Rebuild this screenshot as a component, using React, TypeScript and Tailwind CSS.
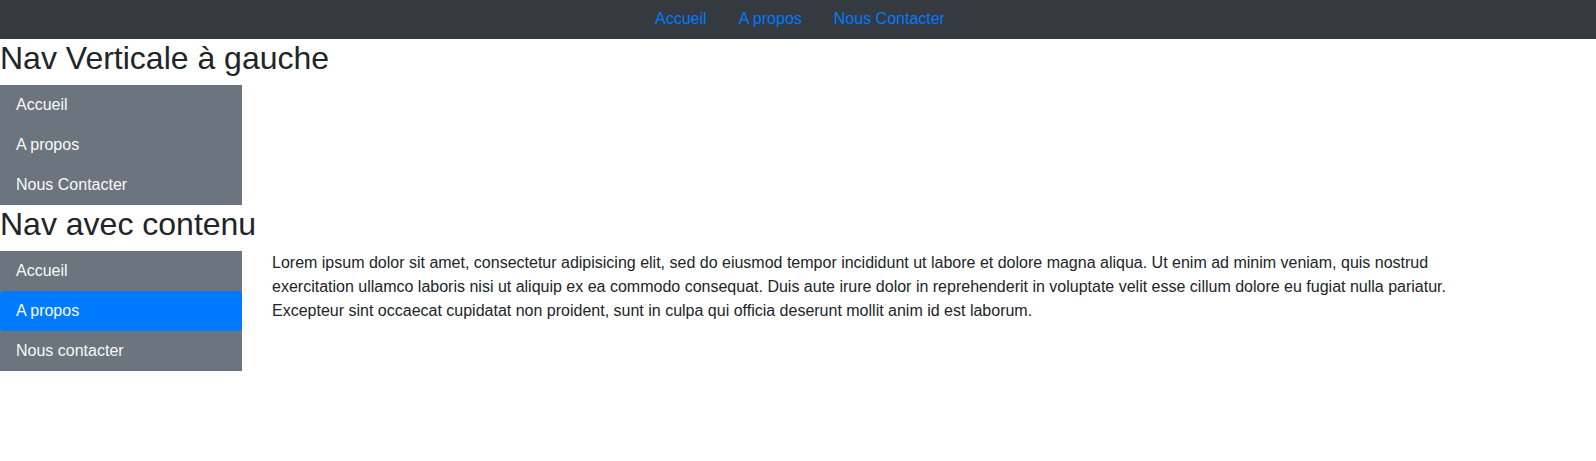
import React from "react";

const font = { fontFamily: '"Liberation Sans", Arial, sans-serif' };

function SideNav({ items, active }: { items: string[]; active?: number }) {
  return (
    <div className="flex w-[242px] shrink-0 flex-col bg-[#6c757d]">
      {items.map((it, i) => (
        <a
          key={it}
          className={
            "block px-4 py-2 text-[16px] leading-6 text-[#f8f9fa] " +
            (i === active ? "rounded bg-[#007bff]" : "")
          }
        >
          {it}
        </a>
      ))}
    </div>
  );
}

export default function App() {
  return (
    <div className="min-h-[461px] bg-white text-[#212529]" style={font}>
      <nav className="flex h-[38.6px] items-center justify-center bg-[#343a40] pl-[4px]">
        {["Accueil", "A propos", "Nous Contacter"].map((t) => (
          <a key={t} className="px-4 text-[16px] leading-6 text-[#007bff]">
            {t}
          </a>
        ))}
      </nav>
      <h2 className="mb-2 text-[32px] font-medium leading-[1.2]">Nav Verticale à gauche</h2>
      <SideNav items={["Accueil", "A propos", "Nous Contacter"]} />
      <h2 className="mb-2 text-[32px] font-medium leading-[1.2]">Nav avec contenu</h2>
      <div className="flex">
        <SideNav items={["Accueil", "A propos", "Nous contacter"]} active={1} />
        <p className="ml-[30px] w-[1210px] text-[16px] leading-6">
          Lorem ipsum dolor sit amet, consectetur adipisicing elit, sed do eiusmod tempor incididunt ut labore et dolore magna aliqua. Ut enim ad minim veniam, quis nostrud exercitation ullamco laboris nisi ut aliquip ex ea commodo consequat. Duis aute irure dolor in reprehenderit in voluptate velit esse cillum dolore eu fugiat nulla pariatur. Excepteur sint occaecat cupidatat non proident, sunt in culpa qui officia deserunt mollit anim id est laborum.
        </p>
      </div>
    </div>
  );
}
